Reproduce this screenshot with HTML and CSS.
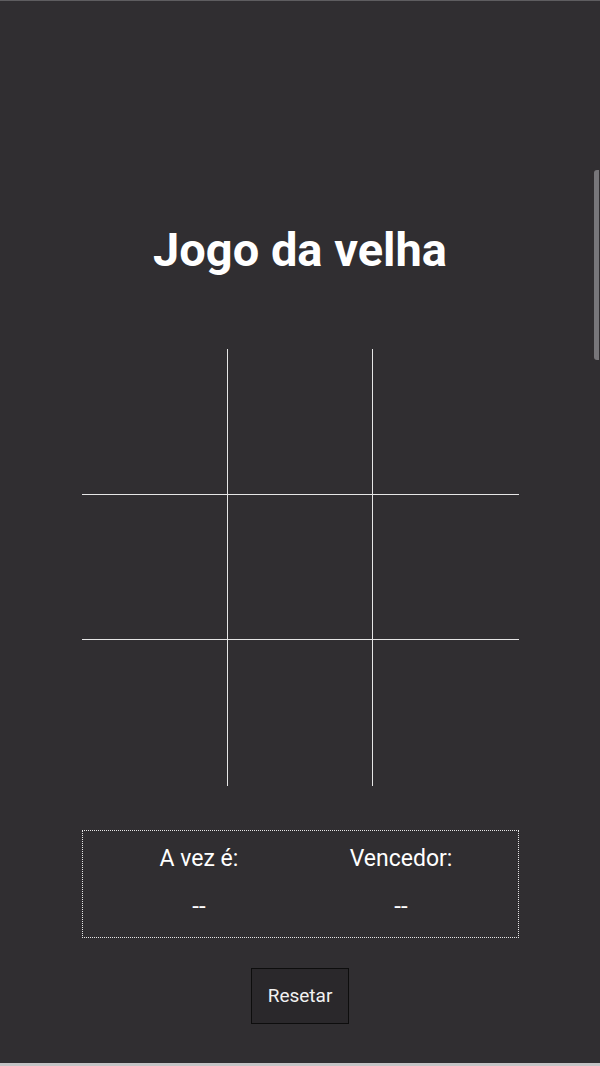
FILE: index.html
```html
<!DOCTYPE html>
<html lang="pt-BR">
<head>
<meta charset="utf-8">
<title>Jogo da velha</title>
<link rel="stylesheet" href="styles.css">
</head>
<body>
<div class="page">
  <main class="game">
    <h1 class="title">Jogo da velha</h1>
    <div class="board">
      <div class="cell"></div><div class="cell"></div><div class="cell"></div>
      <div class="cell"></div><div class="cell"></div><div class="cell"></div>
      <div class="cell"></div><div class="cell"></div><div class="cell"></div>
    </div>
    <div class="info">
      <div class="info-col">
        <span class="info-label">A vez é:</span>
        <span class="info-value">--</span>
      </div>
      <div class="info-col">
        <span class="info-label">Vencedor:</span>
        <span class="info-value">--</span>
      </div>
    </div>
    <button class="reset" type="button">Resetar</button>
  </main>
  <div class="scrollbar"></div>
</div>
</body>
</html>
```
FILE: styles.css
```css
html, body {
  margin: 0;
  padding: 0;
  background: #302e31;
}

.page {
  box-sizing: border-box;
  height: 1066px;
  border-top: 1px solid #5e5d60;
  border-bottom: 3px solid #c4c4c6;
  font-family: Roboto, "Noto Sans", sans-serif;
  color: #ffffff;
}

.game {
  width: 437px;
  margin: 0 auto;
  padding-top: 222px;
  display: flex;
  flex-direction: column;
  align-items: center;
}

.title {
  margin: 0;
  font-size: 47px;
  font-weight: 700;
  line-height: 54px;
  color: #ffffff;
}

.board {
  margin-top: 72px;
  width: 437px;
  height: 437px;
  display: grid;
  grid-template-columns: 146px 145px 146px;
  grid-template-rows: 146px 145px 146px;
}

.cell {
  border-color: #e6e6e6;
  border-style: solid;
  border-width: 0;
}

.cell:nth-child(-n+6) {
  border-bottom-width: 1px;
}

.cell:nth-child(3n+1),
.cell:nth-child(3n+2) {
  border-right-width: 1px;
}

.info {
  box-sizing: border-box;
  margin-top: 44px;
  width: 437px;
  height: 108px;
  border: 1px dotted #e6e6e6;
  display: flex;
  justify-content: center;
  gap: 42px;
  padding-top: 14px;
}

.info-col {
  width: 160px;
  display: flex;
  flex-direction: column;
  align-items: center;
}

.info-label {
  font-size: 23px;
  line-height: 27px;
}

.info-value {
  margin-top: 20px;
  font-size: 24px;
  line-height: 28px;
}

.reset {
  margin-top: 30px;
  width: 98px;
  height: 56px;
  background: #2a282b;
  border: 1px solid #0d0d0d;
  color: #f2f2f2;
  font-family: Roboto, "Noto Sans", sans-serif;
  font-size: 19px;
  padding: 0 0 2px;
}

.scrollbar {
  position: fixed;
  right: 1px;
  top: 170px;
  width: 5px;
  height: 190px;
  border-radius: 3px 0 0 3px;
  background: #77767a;
}
```
